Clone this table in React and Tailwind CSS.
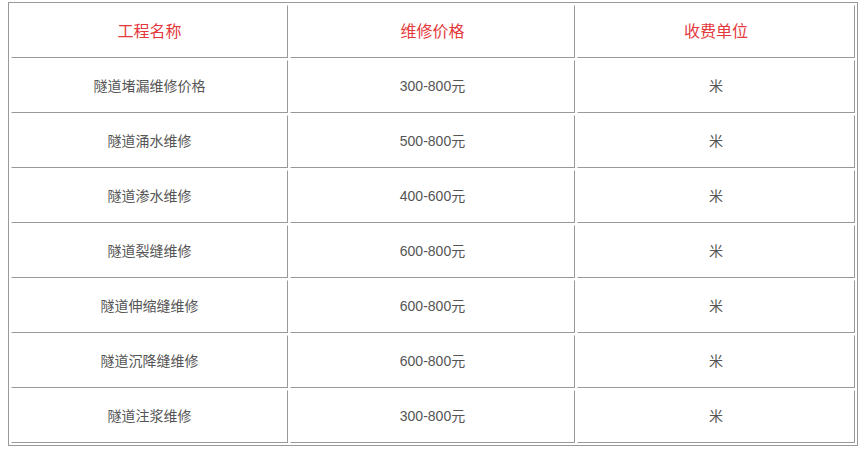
import React from "react";

const rows = [
  ["隧道堵漏维修价格", "300-800元", "米"],
  ["隧道涌水维修", "500-800元", "米"],
  ["隧道渗水维修", "400-600元", "米"],
  ["隧道裂缝维修", "600-800元", "米"],
  ["隧道伸缩缝维修", "600-800元", "米"],
  ["隧道沉降缝维修", "600-800元", "米"],
  ["隧道注浆维修", "300-800元", "米"],
];

const cell =
  "h-[53px] p-0 text-center align-middle border border-t-white border-l-white border-r-[#999] border-b-[#999]";

const App = () => {
  return (
    <div className="w-[866px] h-[451px] bg-white pt-[2px] pl-2 font-['Liberation_Sans','Noto_Sans_CJK_SC',sans-serif]">
      <table className="w-[850px] table-fixed border-separate border-spacing-[2px] border border-[#999]">
        <thead>
          <tr>
            <th className={`${cell} w-[277px] font-normal text-[16px] text-[#e4393c]`}>工程名称</th>
            <th className={`${cell} w-[285px] font-normal text-[16px] text-[#e4393c]`}>维修价格</th>
            <th className={`${cell} w-[278px] font-normal text-[16px] text-[#e4393c]`}>收费单位</th>
          </tr>
        </thead>
        <tbody>
          {rows.map((r) => (
            <tr key={r[0]}>
              {r.map((c, i) => (
                <td key={i} className={`${cell} text-[14px] text-[#555]`}>
                  {c}
                </td>
              ))}
            </tr>
          ))}
        </tbody>
      </table>
    </div>
  );
};

export default App;
